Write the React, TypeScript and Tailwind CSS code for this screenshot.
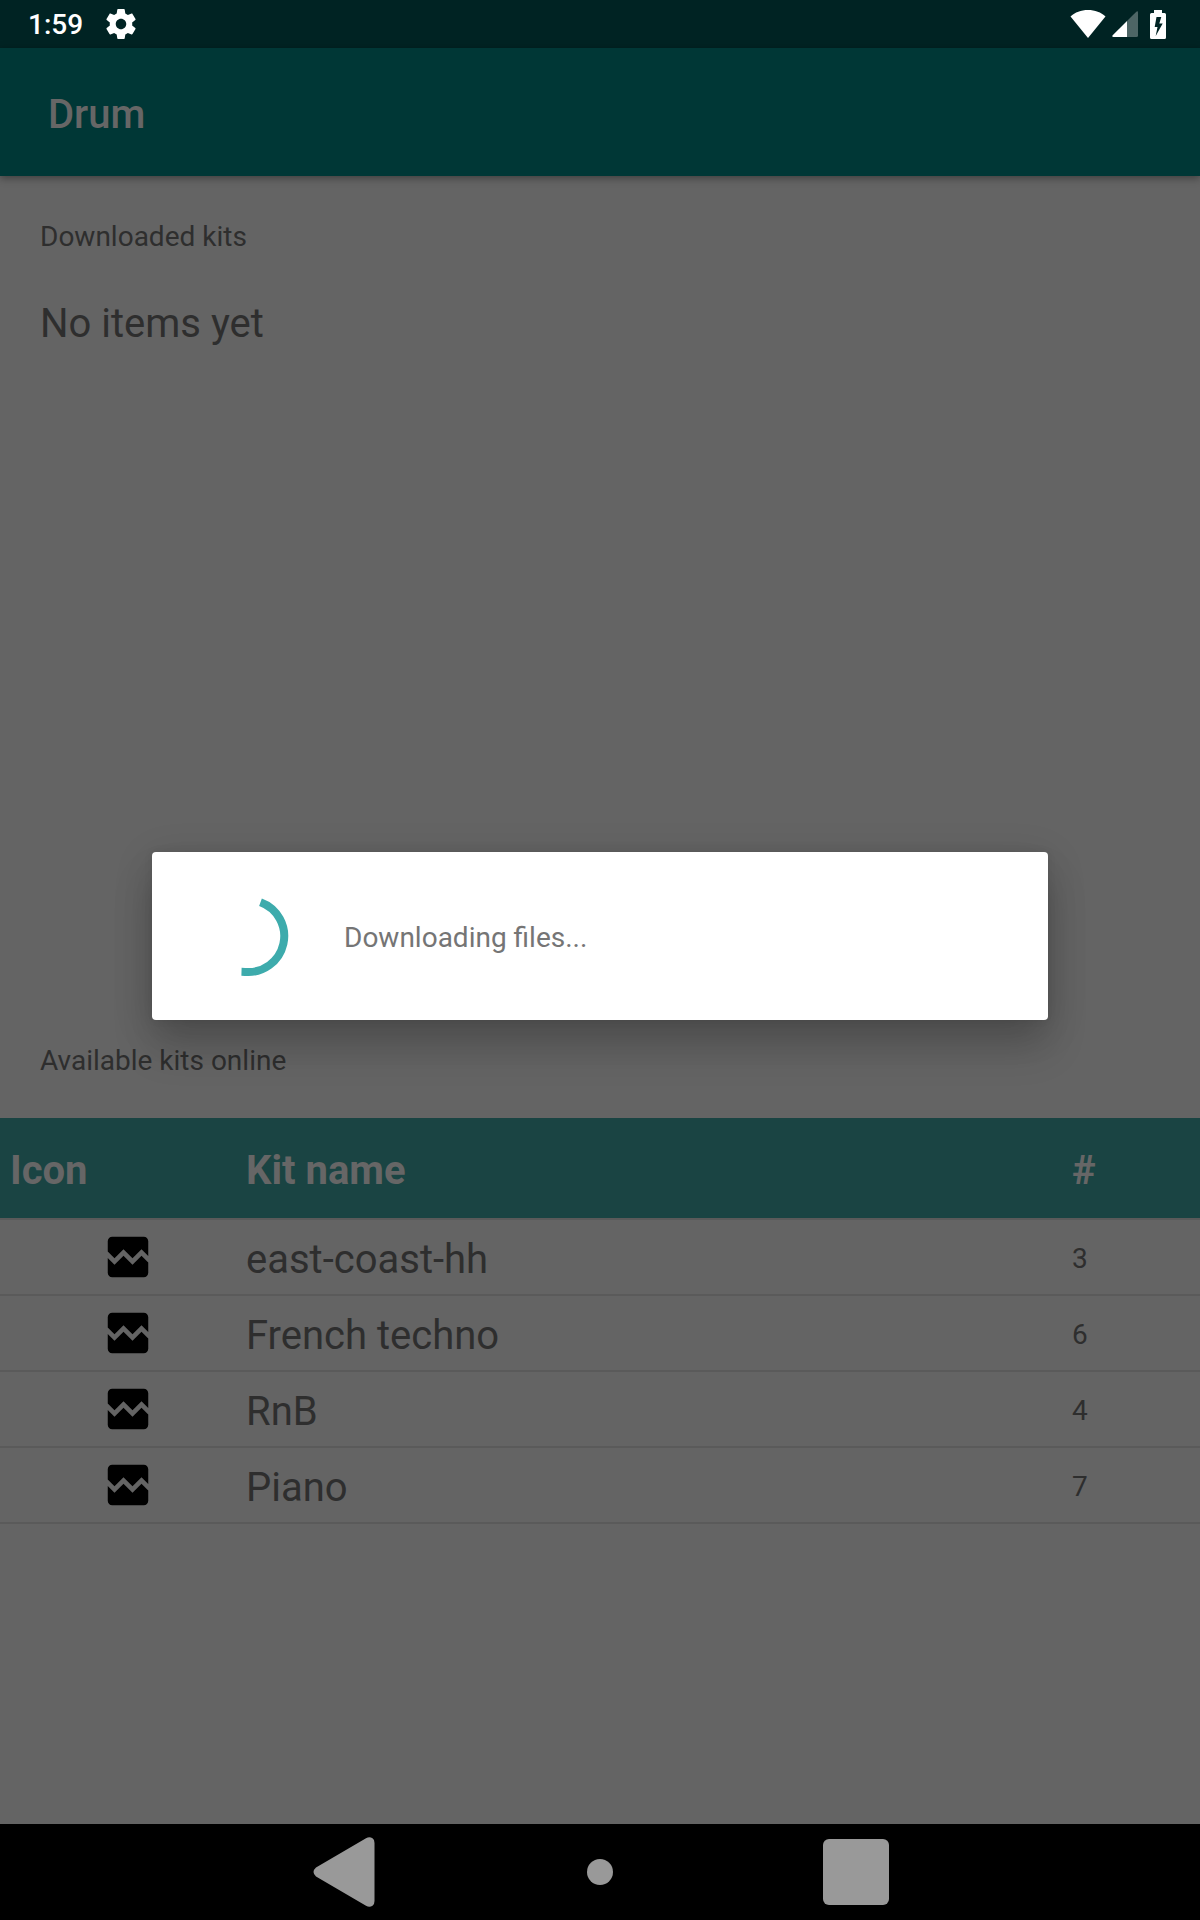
import React from "react";

type Kit = { name: string; count: number };

const kits: Kit[] = [
  { name: "east-coast-hh", count: 3 },
  { name: "French techno", count: 6 },
  { name: "RnB", count: 4 },
  { name: "Piano", count: 7 },
];

function GearIcon() {
  return (
    <svg viewBox="0 0 24 24" className="h-9 w-9" fill="currentColor" aria-hidden="true">
      <path d="M19.43 12.98c.04-.32.07-.64.07-.98s-.03-.66-.07-.98l2.11-1.65c.19-.15.24-.42.12-.64l-2-3.46c-.12-.22-.39-.3-.61-.22l-2.49 1c-.52-.4-1.08-.73-1.69-.98l-.38-2.65A.488.488 0 0 0 14 2h-4c-.25 0-.46.18-.49.42l-.38 2.65c-.61.25-1.17.59-1.69.98l-2.49-1c-.23-.09-.49 0-.61.22l-2 3.46c-.13.22-.07.49.12.64l2.11 1.65c-.04.32-.07.65-.07.98s.03.66.07.98l-2.11 1.65c-.19.15-.24.42-.12.64l2 3.46c.12.22.39.3.61.22l2.49-1c.52.4 1.08.73 1.69.98l.38 2.65c.03.24.24.42.49.42h4c.25 0 .46-.18.49-.42l.38-2.65c.61-.25 1.17-.59 1.69-.98l2.49 1c.23.09.49 0 .61-.22l2-3.46c.12-.22.07-.49-.12-.64l-2.11-1.65zM12 15.5c-1.93 0-3.500-1.570-3.500-3.500s1.570-3.500 3.500-3.500 3.500 1.570 3.500 3.500-1.570 3.500-3.500 3.500z" />
    </svg>
  );
}

function WifiIcon() {
  return (
    <svg viewBox="0 0 36 28" className="h-7 w-9" fill="currentColor" aria-hidden="true">
      <path d="M18 28 .5 6.500C5 2.300 11 0 18 0s13 2.300 17.500 6.500Z" />
    </svg>
  );
}

function SignalIcon() {
  return (
    <svg viewBox="0 0 26 26" className="h-[26px] w-[26px]" fill="currentColor" aria-hidden="true">
      <path d="M15 10 24.300.700Q26-.5 26 1.500V24.500Q26 26 24.500 26H15Z" opacity=".3" />
      <path d="M15 10V26H1.500Q-.5 26 .700 24.300Z" />
    </svg>
  );
}

function BatteryIcon() {
  return (
    <svg viewBox="0 0 16 29" className="h-[29px] w-4" fill="currentColor" aria-hidden="true">
      <path
        fillRule="evenodd"
        d="M4 0h8v3h2.500Q16 3 16 4.500V27.500Q16 29 14.500 29h-13Q0 29 0 27.500V4.500Q0 3 1.500 3H4ZM6.500 7 4.700 17H7.500L5.700 26 12.700 13.500H9.300L11.300 7Z"
      />
    </svg>
  );
}

function BrokenImageIcon() {
  return (
    <svg
      viewBox="0 0 24 24"
      className="mx-auto h-[54px] w-[54px] text-black"
      fill="currentColor"
      role="img"
      aria-label="No icon"
    >
      <path d="M21 5v6.590l-3-3.010-4 4.010-4-4-4 4-3-3.010V5c0-1.100.9-2 2-2h14c1.100 0 2 .9 2 2zm-3 6.420 3 3.010V19c0 1.100-.9 2-2 2H5c-1.100 0-2-.9-2-2v-6.580l3 2.990 4-4 4 4 4-3.990z" />
    </svg>
  );
}

function Spinner() {
  return (
    <svg viewBox="0 0 96 96" className="h-24 w-24 shrink-0" role="progressbar" aria-label="Loading">
      <path
        d="M60.500 14.200A36 36 0 0 1 45 83.900L41.500 83.800"
        fill="none"
        stroke="#3dabac"
        strokeWidth="8"
      />
    </svg>
  );
}

const navButton = "flex h-24 w-64 items-center justify-center text-[#999999]";

export default function App() {
  return (
    <div className="flex min-h-screen flex-col bg-[#646464] font-['Roboto',sans-serif] text-[28px] leading-10 text-[#2e2e2e]">
      <div className="flex h-12 items-center justify-between bg-[#002323] pr-[34px] pl-7 text-white">
        <div className="flex items-center gap-5">
          <span className="pt-0.5 font-medium">1:59</span>
          <GearIcon />
        </div>
        <div className="flex items-center">
          <WifiIcon />
          <span className="ml-1.5 flex">
            <SignalIcon />
          </span>
          <span className="ml-3 flex">
            <BatteryIcon />
          </span>
        </div>
      </div>

      <div className="relative flex flex-1 flex-col">
        <header className="z-10 flex h-32 items-center bg-[#003736] px-12 pt-1.5 shadow-[0_2px_8px_rgba(0,0,0,0.4)]">
          <h1 className="text-[40px] leading-12 font-medium text-[#666666]">Drum</h1>
        </header>

        <main className="flex flex-1 flex-col">
          <section className="flex-1 basis-0">
            <h2 className="px-10 pt-[41px] pb-[37px]">Downloaded kits</h2>
            <p className="px-10 pt-1.5 text-[40px] leading-12">No items yet</p>
          </section>

          <section className="flex-1 basis-0">
            <h2 className="px-10 pt-[41px] pb-[37px]">Available kits online</h2>
            <table className="w-full table-fixed border-collapse text-left">
              <thead>
                <tr className="h-[101px] border-b-2 border-[#5a5a5a] bg-[#1a4443] text-[40px] leading-12 text-[#666666]">
                  <th scope="col" className="w-[246px] pt-1.5 pl-2.5 font-bold">Icon</th>
                  <th scope="col" className="pt-1.5 font-bold">Kit name</th>
                  <th scope="col" className="w-32 pt-1.5 font-bold">#</th>
                </tr>
              </thead>
              <tbody>
                {kits.map((kit) => (
                  <tr key={kit.name} className="h-[76px] border-b-2 border-[#5a5a5a]">
                    <td className="pl-2.5">
                      <BrokenImageIcon />
                    </td>
                    <td className="pt-1.5 text-[40px] leading-12">{kit.name}</td>
                    <td className="pt-1">{kit.count}</td>
                  </tr>
                ))}
              </tbody>
            </table>
          </section>
        </main>

        <div className="absolute inset-0 z-20 flex items-center justify-center px-[152px]">
          <div
            role="dialog"
            aria-modal="true"
            aria-labelledby="download-message"
            className="flex h-42 w-full items-center gap-12 rounded bg-white px-12 text-[#757575] shadow-[0_28px_40px_rgba(0,0,0,0.16),0_8px_40px_rgba(0,0,0,0.14),0_0_8px_rgba(0,0,0,0.08)]"
          >
            <Spinner />
            <p id="download-message" className="pt-1">Downloading files...</p>
          </div>
        </div>
      </div>

      <nav className="flex h-24 justify-center bg-black" aria-label="System navigation">
        <button type="button" aria-label="Back" className={navButton}>
          <svg viewBox="0 0 62 70" className="h-[70px] w-[62px]" fill="currentColor" aria-hidden="true">
            <path d="M53 1.200Q56.500-.8 59.500 1.200Q61.500 2.500 61.500 6V64Q61.500 67.500 59.500 68.800Q56.500 70.800 53 68.800L3 39.500Q-2 35 3 30.500Z" />
          </svg>
        </button>
        <button type="button" aria-label="Home" className={navButton}>
          <span className="h-[26px] w-[26px] rounded-full bg-[#999999]" />
        </button>
        <button type="button" aria-label="Overview" className={navButton}>
          <span className="h-[66px] w-[66px] rounded-md bg-[#999999]" />
        </button>
      </nav>
    </div>
  );
}
